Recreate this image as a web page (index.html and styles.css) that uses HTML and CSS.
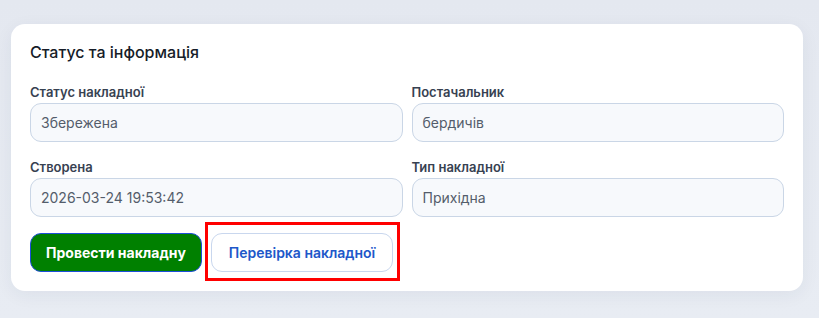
FILE: index.html
```html
<!DOCTYPE html>
<html lang="uk">
<head>
    <meta charset="UTF-8">
    <meta name="viewport" content="width=device-width, initial-scale=1.0">
    <title>Статус та інформація</title>
    <link rel="stylesheet" href="styles.css">
</head>
<body>
    <div class="card">
        <h2 class="card-title">Статус та інформація</h2>

        <div class="fields">
            <div class="field">
                <label class="field-label">Статус накладної</label>
                <div class="field-value">Збережена</div>
            </div>
            <div class="field">
                <label class="field-label">Постачальник</label>
                <div class="field-value">бердичів</div>
            </div>
            <div class="field">
                <label class="field-label">Створена</label>
                <div class="field-value">2026-03-24 19:53:42</div>
            </div>
            <div class="field">
                <label class="field-label">Тип накладної</label>
                <div class="field-value">Прихідна</div>
            </div>
        </div>

        <div class="actions">
            <button class="btn btn-primary">Провести накладну</button>
            <button class="btn btn-outline highlight">Перевірка накладної</button>
        </div>
    </div>
</body>
</html>
```

FILE: styles.css
```css
body {
    margin: 0;
    padding: 24px 16px 0 11px;
    font-family: Inter, "Noto Sans", sans-serif;
    background: linear-gradient(180deg, #e4e8f0 0%, #e8ecf3 100%);
    min-height: 318px;
    box-sizing: border-box;
}

.card {
    width: 792px;
    box-sizing: border-box;
    background: #ffffff;
    border-radius: 14px;
    padding: 18px 19px 19px;
    box-shadow: 0 4px 18px rgba(30, 50, 90, 0.06);
}

.card-title {
    margin: 0 0 22px;
    font-size: 16px;
    line-height: 20px;
    font-weight: 500;
    color: #161c28;
}

.fields {
    display: grid;
    grid-template-columns: 1fr 1fr;
    column-gap: 9px;
    row-gap: 17px;
}

.field-label {
    display: block;
    font-size: 13px;
    line-height: 16px;
    font-weight: 600;
    color: #374151;
    margin-bottom: 3px;
}

.field-value {
    height: 39px;
    box-sizing: border-box;
    display: flex;
    align-items: center;
    padding: 0 10px;
    border: 1px solid #cad6e6;
    border-radius: 11px;
    background: #f7f9fc;
    font-size: 14px;
    color: #545d6b;
}

.actions {
    display: flex;
    gap: 9px;
    margin-top: 16px;
}

.btn {
    height: 39px;
    padding: 0 16px;
    border-radius: 11px;
    font-family: inherit;
    font-size: 14px;
    cursor: pointer;
}

.btn-primary {
    background: #008000;
    border: 1px solid #1d4ed8;
    color: #ffffff;
    font-weight: 700;
    width: 172px;
    padding: 0;
}

.btn-outline {
    background: #ffffff;
    border: 1px solid #c9d7ee;
    color: #2057c9;
    font-weight: 600;
    padding: 0;
    width: 182px;
}

.highlight {
    position: relative;
}

.highlight::after {
    content: "";
    position: absolute;
    left: -7px;
    right: -8px;
    top: -12px;
    bottom: -10px;
    border: 3px solid #ff0000;
    pointer-events: none;
}
```
